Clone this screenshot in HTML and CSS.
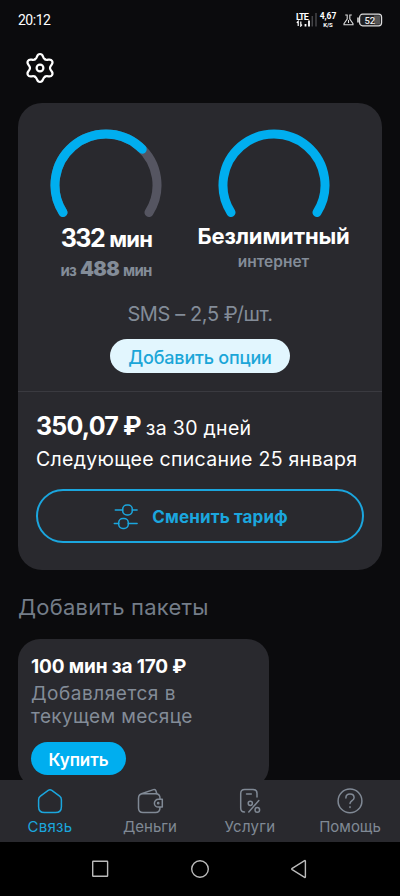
FILE: index.html
```html
<!DOCTYPE html>
<html lang="ru">
<head>
<meta charset="utf-8">
<meta name="viewport" content="width=device-width, initial-scale=1">
<title>Связь</title>
<link rel="stylesheet" href="styles.css">
</head>
<body>
<div class="screen">
  <header class="status">
    <time class="clock">20:12</time>
    <div class="status-icons">
      <div class="lte">
        <span>LTE</span>
        <svg width="22" height="15" viewBox="0 0 22 15" fill="none">
          <path d="M2.200 14V9.500L.8 10.800M4.800 9.500V14L6 12.700" stroke="#fff" stroke-width="1.200"/>
          <path d="M9.500 12v2.500M13 8.500v6" stroke="#fff" stroke-width="1.800"/>
          <path d="M16.300 4v10.500M20 1v13.500" stroke="#454548" stroke-width="1.500"/>
        </svg>
      </div>
      <div class="speed"><span>4,67</span><small>K/S</small></div>
      <svg class="flask" width="11" height="12" viewBox="0 0 11 12" fill="none" stroke="#ddd" stroke-width="1.100">
        <path d="M2.200 1h2v4L1 9.600v1.200h9V9.600L6.800 5V1h2M5.500 6v3"/>
      </svg>
      <svg width="26" height="14" viewBox="0 0 26 14" fill="none">
        <rect x="2.600" y="1.200" width="22" height="11.600" rx="3" fill="#202022" stroke="#ddd" stroke-width="1.200"/>
        <rect x="17" y="2.500" width="6.200" height="9" fill="#555"/>
        <path d="M1 4.500v5" stroke="#ddd" stroke-width="1.600"/>
        <text x="12.800" y="10.600" class="battery-text">52</text>
      </svg>
    </div>
  </header>

  <main class="content">
    <div class="toolbar">
      <svg width="32" height="34" viewBox="0 0 32 34" fill="none" stroke="#fff" stroke-width="2.200" stroke-linecap="round">
        <defs><path id="tooth" d="M11 8.340C13.800 6.900 12.200 3 16 3s2.200 3.900 5 5.340"/></defs>
        <use href="#tooth"/>
        <use href="#tooth" transform="rotate(60 16 17)"/>
        <use href="#tooth" transform="rotate(120 16 17)"/>
        <use href="#tooth" transform="rotate(180 16 17)"/>
        <use href="#tooth" transform="rotate(240 16 17)"/>
        <use href="#tooth" transform="rotate(300 16 17)"/>
        <circle cx="16" cy="17" r="3.400"/>
      </svg>
    </div>

    <section class="card tariff">
      <div class="usage">
        <div class="balances">
          <div class="balance">
            <svg class="gauge" width="120" height="92" viewBox="0 0 120 92">
              <path class="track" d="M17 87.500A51 51 0 1 1 103 87.500"/>
              <path class="value part" pathLength="100" d="M17 87.500A51 51 0 1 1 103 87.500"/>
            </svg>
            <div class="minutes"><span class="count">332</span><span class="unit">мин</span></div>
            <div class="total"><span>из</span><b>488</b><span>мин</span></div>
          </div>
          <div class="balance">
            <svg class="gauge" width="120" height="92" viewBox="0 0 120 92">
              <path class="value" d="M17 87.500A51 51 0 1 1 103 87.500"/>
            </svg>
            <div class="unlimited">Безлимитный</div>
            <div class="internet">интернет</div>
          </div>
        </div>
        <div class="sms">SMS – 2,5 ₽/шт.</div>
        <button class="options">Добавить опции</button>
      </div>
      <div class="payment">
        <div class="price"><b>350,07 ₽</b><span>за 30 дней</span></div>
        <div class="next">Следующее списание 25 января</div>
        <button class="change">
          <svg width="26" height="28" viewBox="0 0 26 28" fill="none" stroke="#1ba6de" stroke-width="1.500" stroke-linecap="round">
            <rect x="9.700" y="2.100" width="9.600" height="9.800" rx="4.200"/>
            <rect x="5.700" y="15.600" width="9.600" height="9.800" rx="4.200"/>
            <path d="M2.300 7h7.400M19.300 7h4.800M1.300 20.500h4.400M15.300 20.500h8.800"/>
          </svg>
          <span>Сменить тариф</span>
        </button>
      </div>
    </section>

    <h2 class="heading">Добавить пакеты</h2>
    <section class="card pack">
      <div class="pack-title">100 мин за 170 ₽</div>
      <p class="pack-text"><span>Добавляется в</span><br>текущем месяце</p>
      <button class="buy">Купить</button>
    </section>
  </main>

  <nav class="tabs">
    <a class="tab active">
      <svg width="28" height="28" viewBox="0 0 28 28"><path d="M2.600 11.700Q2.600 9.400 4.400 8.100L12.200 2.300Q14 1 15.800 2.300L23.600 8.100Q25.400 9.400 25.400 11.700V18.700Q25.400 24.500 19.500 24.500H8.500Q2.600 24.500 2.600 18.700Z"/></svg>
      <span class="l1">Связь</span>
    </a>
    <a class="tab">
      <svg width="28" height="28" viewBox="0 0 28 28"><path d="M24 11.200V10.200C24 7.500 22.400 5.700 19.500 5.700H7Q2.500 5.700 2.500 10.200V20Q2.500 24.500 7 24.500h12.500c2.900 0 4.500-1.900 4.500-5.300M5.500 5.700 17.400 1.600q2-.6 2.600 1.400l.8 2.700M26.300 11.300h-4a3.900 3.900 0 0 0 0 7.800h4Z"/><circle cx="22.200" cy="15.200" r=".6"/></svg>
      <span class="l2">Деньги</span>
    </a>
    <a class="tab">
      <svg width="28" height="28" viewBox="0 0 28 28"><path d="M8.500 24Q4.700 24 4.700 20V5.500Q4.700 1.500 8.700 1.500H17q4 0 4 4V9M10.500 6h4.800M12.800 24 22.800 12.500"/><circle cx="14.300" cy="15.300" r="2.100"/><circle cx="21.300" cy="21.900" r="2.300"/></svg>
      <span class="l3">Услуги</span>
    </a>
    <a class="tab">
      <svg width="28" height="28" viewBox="0 0 28 28"><circle cx="14" cy="12.900" r="11.900"/><path d="M9.900 9.900c0-2.400 1.700-3.900 4.100-3.900s4.100 1.500 4.100 3.700c0 2.800-4.100 3.200-4.100 5.900M14 18.800v.6"/></svg>
      <span class="l4">Помощь</span>
    </a>
  </nav>

  <footer class="system">
    <svg width="20" height="20" viewBox="0 0 20 20"><rect x="2.700" y="2.200" width="14.900" height="15" rx=".5"/></svg>
    <svg width="20" height="20" viewBox="0 0 20 20"><circle cx="10" cy="10" r="8.300"/></svg>
    <svg width="20" height="20" viewBox="0 0 20 20"><path d="M15.400 2v15.800q0 .9-.8.500L2.200 10.600q-.9-.6 0-1.200L14.600 1.700q.8-.4.800.3Z"/></svg>
  </footer>
</div>
</body>
</html>
```
FILE: styles.css
```css
* { box-sizing: border-box; }

body {
  margin: 0;
  background: #0b0b0d;
  color: #fff;
  font-family: Inter, "Liberation Sans", sans-serif;
}

button {
  border: 0;
  padding: 0;
  font-family: inherit;
  display: flex;
  align-items: center;
  justify-content: center;
}

svg { display: block; flex: none; }

.screen {
  width: 400px;
  height: 896px;
  display: flex;
  flex-direction: column;
  overflow: hidden;
}

.status {
  flex: none;
  height: 40px;
  padding: 0 17px 0 18px;
  display: flex;
  align-items: center;
  justify-content: space-between;
}

.clock {
  font: 400 14px/20px Roboto, sans-serif;
  letter-spacing: -0.5px;
}

.status-icons { display: flex; align-items: center; }

.lte {
  display: grid;
  width: 24px;
  height: 15px;
  font: 700 9px/8px Roboto, sans-serif;
}

.lte span, .lte svg { grid-area: 1 / 1; }
.lte span { letter-spacing: -0.8px; }
.lte svg { margin-top: -1px; }

.speed {
  display: flex;
  flex-direction: column;
  align-items: center;
  gap: 1px;
  width: 16px;
  margin-right: 7px;
  font: 700 8.5px/8px Roboto, sans-serif;
  letter-spacing: -0.1px;
}

.speed small { font-size: 6px; line-height: 7px; }
.flask { margin-right: 3px; }

.battery-text {
  fill: #eee;
  font: 500 9.5px Roboto, sans-serif;
  text-anchor: middle;
}

.content {
  flex: 1;
  min-height: 0;
  overflow: hidden;
  padding: 0 18px;
}

.toolbar { height: 63px; padding: 11px 0 0 6px; }

.card { background: #29292e; }

.tariff { height: 467px; border-radius: 24px; }

.usage {
  height: 289px;
  border-bottom: 1px solid #3a3a40;
  display: flex;
  flex-direction: column;
  align-items: center;
}

.balances {
  align-self: stretch;
  height: 199px;
  padding-top: 22px;
  display: grid;
  grid-template-columns: 176px 159px;
}

.balance { display: flex; flex-direction: column; align-items: center; }

.gauge { margin-bottom: 5px; }

.track, .value {
  fill: none;
  stroke-width: 9;
  stroke-linecap: round;
}

.track { stroke: #555561; }
.value { stroke: #00aeef; }
.part { stroke-dasharray: 68.5 100; }

.minutes {
  display: flex;
  align-items: baseline;
  gap: 5px;
  padding-left: 1px;
  font-weight: 700;
  line-height: 32px;
}

.count { font-size: 25px; letter-spacing: -1.5px; }
.unit { font-size: 22px; letter-spacing: -0.7px; }

.total {
  display: flex;
  align-items: baseline;
  gap: 4px;
  margin-top: 2px;
  color: #838c98;
  font-size: 15px;
  font-weight: 700;
  line-height: 24px;
  letter-spacing: -0.8px;
}

.total b { font-size: 20px; letter-spacing: -0.7px; }

.unlimited {
  font-size: 22px;
  font-weight: 700;
  line-height: 28px;
  letter-spacing: -0.15px;
}

.internet {
  margin-top: 2px;
  color: #838c98;
  font-size: 15.5px;
  font-weight: 600;
  line-height: 20px;
}

.sms {
  color: #838c98;
  font-size: 20px;
  line-height: 24px;
  letter-spacing: -0.4px;
}

.options {
  width: 180px;
  height: 34px;
  margin-top: 13px;
  padding-top: 2px;
  border-radius: 17px;
  background: #e2f6fe;
  color: #1ba6d8;
  font-size: 18px;
  font-weight: 500;
  letter-spacing: -0.2px;
}

.payment { padding: 19px 18px 0; }

.price {
  display: flex;
  align-items: baseline;
  gap: 5px;
  height: 30px;
  line-height: 30px;
  font-size: 19.5px;
  letter-spacing: 0.3px;
}

.price b { font-size: 25px; letter-spacing: -0.8px; }

.next {
  margin-top: 5px;
  font-size: 19.5px;
  line-height: 26px;
  letter-spacing: 0.28px;
  white-space: nowrap;
}

.change {
  width: 328px;
  height: 54px;
  margin-top: 17px;
  padding: 1px 0 0 1px;
  border: 2px solid #1ba6de;
  border-radius: 27px;
  background: none;
  color: #1ba6de;
  gap: 13px;
  font-size: 17px;
  font-weight: 700;
  letter-spacing: 0.15px;
}

.heading {
  margin: 0;
  padding: 22px 0 17px;
  color: #747d88;
  font-size: 22px;
  font-weight: 400;
  line-height: 30px;
  letter-spacing: 0.22px;
}

.pack {
  width: 251px;
  height: 149px;
  padding: 16px 13px;
  border-radius: 22px;
}

.pack-title {
  font-size: 19px;
  font-weight: 700;
  line-height: 24px;
  letter-spacing: -0.15px;
}

.pack-text {
  margin: 3px 0 14px;
  color: #838c98;
  font-size: 19px;
  line-height: 23px;
  letter-spacing: 0.35px;
}

.pack-text span { letter-spacing: 0.53px; }

.buy {
  width: 95px;
  height: 33px;
  border-radius: 17px;
  background: #00aeef;
  color: #fff;
  font-size: 17px;
  font-weight: 600;
  line-height: 20px;
  padding-top: 3px;
  letter-spacing: -0.1px;
}

.tabs {
  flex: none;
  height: 62px;
  background: #29292e;
  display: grid;
  grid-template-columns: repeat(4, 1fr);
}

.tab {
  display: flex;
  flex-direction: column;
  align-items: center;
  padding-top: 8px;
  color: #808995;
  font-size: 15px;
  line-height: 20px;
}

.tab svg {
  fill: none;
  stroke: currentColor;
  stroke-width: 1.5;
  stroke-linecap: round;
  stroke-linejoin: round;
}

.tab span { margin-top: 1px; }
.tab .l1, .tab .l3 { letter-spacing: 0.28px; }
.active { color: #1ba6de; }

.system {
  flex: none;
  height: 54px;
  padding: 0 90px;
  background: #000;
  display: flex;
  align-items: center;
  justify-content: space-between;
}

.system svg { fill: none; stroke: #bbb; stroke-width: 1.4; }
```
